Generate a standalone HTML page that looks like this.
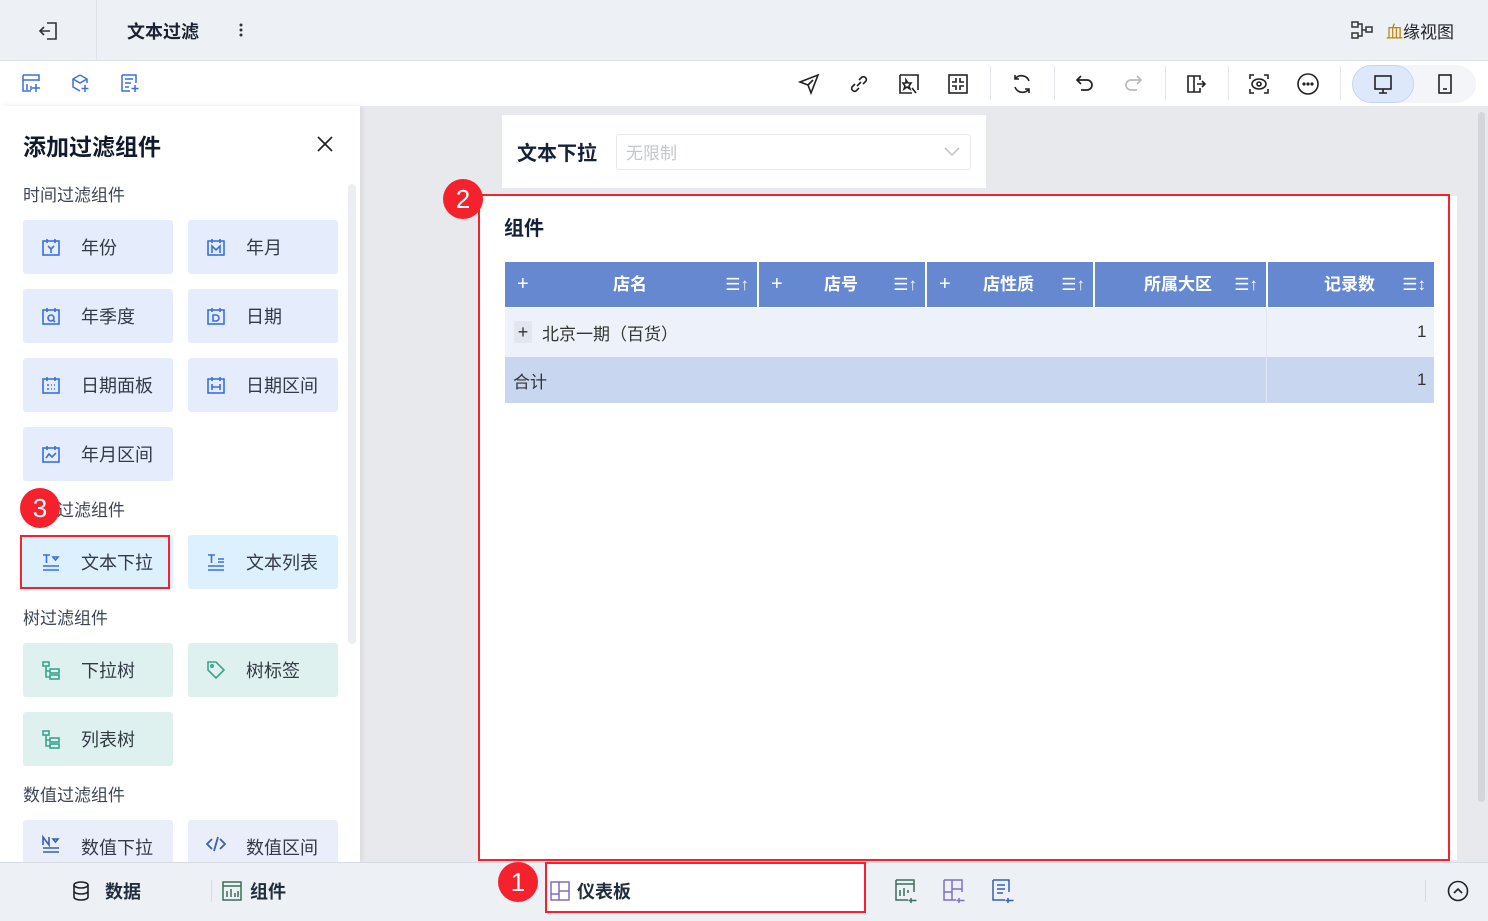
<!DOCTYPE html>
<html><head><meta charset="utf-8"><style>
*{box-sizing:border-box;margin:0;padding:0}
body{width:1488px;height:921px;overflow:hidden;position:relative;font-family:"Liberation Sans","Noto Sans CJK SC",sans-serif;background:#e8e9ed;color:#1f2d3d}
.a{position:absolute}
.btn{position:absolute;width:150px;height:54px;border-radius:3px;font-size:18px;color:#333a45;display:flex;align-items:center;padding-bottom:1px}
.btn svg{margin-left:18px;margin-right:20px}
.sec{position:absolute;left:23px;font-size:17px;color:#3d4654}
.circ{position:absolute;width:40px;height:40px;border-radius:50%;background:#f5222d;color:#fff;font-size:26px;text-align:center;line-height:40px}
.th{position:absolute;top:262px;height:45px;background:#6688d0;color:#fff;font-weight:bold;font-size:17px;line-height:45px}
.ic{position:absolute;top:72px}
</style></head><body>
<div class="a" style="left:0;top:0;width:1488px;height:61px;background:#edf0f5;border-bottom:1px solid #dde1e8"></div>
<div class="a" style="left:96px;top:0;width:1px;height:60px;background:#dde1e8"></div>
<svg class="a" style="left:38px;top:20px" width="22" height="22" viewBox="0 0 22 22" fill="none" stroke="#333" stroke-width="1.6"><path d="M9 3h9v16H9M2 11h10M6 7l-4 4 4 4"/></svg>
<div class="a" style="left:127px;top:18px;font-size:18px;font-weight:bold;color:#1a2233">文本过滤</div>
<svg class="a" style="left:238px;top:22px" width="6" height="16"><circle cx="3" cy="3" r="1.5" fill="#333"/><circle cx="3" cy="8" r="1.5" fill="#333"/><circle cx="3" cy="13" r="1.5" fill="#333"/></svg>
<svg class="a" style="left:1351px;top:21px" width="22" height="18" viewBox="0 0 22 18" fill="none" stroke="#333" stroke-width="1.5"><rect x="1" y="1" width="6" height="5"/><rect x="1" y="12" width="6" height="5"/><rect x="15" y="6" width="6" height="5"/><path d="M7 3h4v12H7M11 9h4"/></svg>
<div class="a" style="left:1386px;top:18px;font-size:17px;color:#222"><span style="color:#b8860b">血</span>缘视图</div>
<div class="a" style="left:0;top:61px;width:1488px;height:45px;background:#fff"></div>
<svg class="a" style="left:21px;top:73px" width="20" height="20" viewBox="0 0 20 20" fill="none" stroke="#3a6fe0" stroke-width="1.5"><path d="M2 2h16v6M2 2v16h8M2 7h16M6 11v6M10 13v4M15 11v8M11 15h8"/></svg>
<svg class="a" style="left:70px;top:73px" width="20" height="20" viewBox="0 0 20 20" fill="none" stroke="#3a6fe0" stroke-width="1.5"><path d="M10 2l7 4v4M10 2L3 6v8l7 4M3 6l7 4 7-4M15 12v7M11.5 15.5h7"/></svg>
<svg class="a" style="left:120px;top:73px" width="20" height="20" viewBox="0 0 20 20" fill="none" stroke="#3a6fe0" stroke-width="1.5"><path d="M2 2h14v8M2 2v16h8M5 6h8M5 10h6M5 14h4M15 12v7M11.5 15.5h7"/></svg>
<svg class="ic" style="left:797px" width="24" height="24" viewBox="0 0 24 24" fill="none" stroke="#222" stroke-width="1.6"><path d="M3 10l18-7-7 18-3-8zM11 13l5-5"/></svg>
<svg class="ic" style="left:847px" width="24" height="24" viewBox="0 0 24 24" fill="none" stroke="#222" stroke-width="1.6"><path d="M10 14l4-4M8 12l-3 3a3 3 0 004 4l3-3M16 12l3-3a3 3 0 00-4-4l-3 3"/></svg>
<svg class="ic" style="left:897px" width="24" height="24" viewBox="0 0 24 24" fill="none" stroke="#222" stroke-width="1.6"><path d="M3 3h18v15M3 3v18h12"/><path d="M9 8l2 3 3 0-2 3 1 3-3-2-3 2 1-3-2-3h3zM15 16l4 5"/></svg>
<svg class="ic" style="left:946px" width="24" height="24" viewBox="0 0 24 24" fill="none" stroke="#222" stroke-width="1.6"><rect x="3" y="3" width="18" height="18"/><path d="M10 6v4H6M14 6v4h4M10 18v-4H6M14 18v-4h4"/></svg>
<div class="a" style="left:990px;top:66px;width:1px;height:34px;background:#e3e6ea"></div>
<svg class="ic" style="left:1010px" width="24" height="24" viewBox="0 0 24 24" fill="none" stroke="#222" stroke-width="1.6"><path d="M19 9a8 8 0 00-14-2M5 15a8 8 0 0014 2M5 3v4h4M19 21v-4h-4"/></svg>
<div class="a" style="left:1054px;top:66px;width:1px;height:34px;background:#e3e6ea"></div>
<svg class="ic" style="left:1073px" width="24" height="24" viewBox="0 0 24 24" fill="none" stroke="#222" stroke-width="1.7"><path d="M4 8h10a5 5 0 010 10H8M8 4L4 8l4 4"/></svg>
<svg class="ic" style="left:1121px" width="24" height="24" viewBox="0 0 24 24" fill="none" stroke="#bbb" stroke-width="1.7"><path d="M20 8H10a5 5 0 000 10h6M16 4l4 4-4 4"/></svg>
<div class="a" style="left:1165px;top:66px;width:1px;height:34px;background:#e3e6ea"></div>
<svg class="ic" style="left:1184px" width="24" height="24" viewBox="0 0 24 24" fill="none" stroke="#222" stroke-width="1.6"><path d="M4 4h6v16H4zM10 4h6v4M10 20h6v-4M13 12h8M18 9l3 3-3 3"/></svg>
<div class="a" style="left:1228px;top:66px;width:1px;height:34px;background:#e3e6ea"></div>
<svg class="ic" style="left:1247px" width="24" height="24" viewBox="0 0 24 24" fill="none" stroke="#222" stroke-width="1.6"><path d="M3 7V3h4M17 3h4v4M21 17v4h-4M7 21H3v-4"/><ellipse cx="12" cy="12" rx="7" ry="5"/><circle cx="12" cy="12" r="2"/></svg>
<svg class="ic" style="left:1296px" width="24" height="24" viewBox="0 0 24 24" fill="none" stroke="#222" stroke-width="1.6"><circle cx="12" cy="12" r="10"/><circle cx="8" cy="12" r=".8" fill="#222"/><circle cx="12" cy="12" r=".8" fill="#222"/><circle cx="16" cy="12" r=".8" fill="#222"/></svg>
<div class="a" style="left:1340px;top:66px;width:1px;height:34px;background:#e3e6ea"></div>
<div class="a" style="left:1352px;top:65px;width:124px;height:38px;border-radius:19px;background:#f3f5f8"></div>
<div class="a" style="left:1352px;top:65px;width:62px;height:38px;border-radius:19px;background:#dde8fb;border:1px solid #c5d6f5"></div>
<svg class="ic" style="left:1371px" width="24" height="24" viewBox="0 0 24 24" fill="none" stroke="#222" stroke-width="1.6"><rect x="4" y="4" width="16" height="13"/><path d="M12 17v4M8 21h8"/></svg>
<svg class="ic" style="left:1433px" width="24" height="24" viewBox="0 0 24 24" fill="none" stroke="#222" stroke-width="1.6"><rect x="6" y="3" width="12" height="18"/><path d="M10 17h4"/></svg>
<div class="a" style="left:0;top:106px;width:360px;height:756px;background:#fff;box-shadow:2px 0 6px rgba(0,0,0,.08)"></div>
<div class="a" style="left:348px;top:184px;width:8px;height:460px;border-radius:4px;background:#eceef2"></div>
<div class="a" style="left:23px;top:128px;font-size:23px;font-weight:bold;color:#111a2b">添加过滤组件</div>
<svg class="a" style="left:316px;top:135px" width="18" height="18" viewBox="0 0 18 18" stroke="#222" stroke-width="1.7"><path d="M2 2l14 14M16 2L2 16"/></svg>
<div class="sec" style="top:181px">时间过滤组件</div>
<div class="btn" style="left:23px;top:220px;background:#e5edfd"><svg width="20" height="20" viewBox="0 0 20 20" fill="none" stroke="#3a6fe0" stroke-width="1.6"><rect x="2" y="4" width="16" height="14"/><path d="M6 2v4M14 2v4M7 9l3 3 3-3M10 12v4"/></svg>年份</div>
<div class="btn" style="left:188px;top:220px;background:#e5edfd"><svg width="20" height="20" viewBox="0 0 20 20" fill="none" stroke="#3a6fe0" stroke-width="1.6"><rect x="2" y="4" width="16" height="14"/><path d="M6 2v4M14 2v4M6 16V9l4 4 4-4v7"/></svg>年月</div>
<div class="btn" style="left:23px;top:289px;background:#e5edfd"><svg width="20" height="20" viewBox="0 0 20 20" fill="none" stroke="#3a6fe0" stroke-width="1.6"><rect x="2" y="4" width="16" height="14"/><path d="M6 2v4M14 2v4"/><circle cx="10" cy="12" r="3"/><path d="M12 14l2 2"/></svg>年季度</div>
<div class="btn" style="left:188px;top:289px;background:#e5edfd"><svg width="20" height="20" viewBox="0 0 20 20" fill="none" stroke="#3a6fe0" stroke-width="1.6"><rect x="2" y="4" width="16" height="14"/><path d="M6 2v4M14 2v4M7 9h3a3 3 0 010 6H7z"/></svg>日期</div>
<div class="btn" style="left:23px;top:358px;background:#e5edfd"><svg width="20" height="20" viewBox="0 0 20 20" fill="none" stroke="#3a6fe0" stroke-width="1.6"><rect x="2" y="4" width="16" height="14"/><path d="M6 2v4M14 2v4M6 10h2M10 10h1M13 10h1M6 14h2M10 14h1M13 14h1"/></svg>日期面板</div>
<div class="btn" style="left:188px;top:358px;background:#e5edfd"><svg width="20" height="20" viewBox="0 0 20 20" fill="none" stroke="#3a6fe0" stroke-width="1.6"><rect x="2" y="4" width="16" height="14"/><path d="M6 2v4M14 2v4M6 9v6M14 9v6M6 12h8"/></svg>日期区间</div>
<div class="btn" style="left:23px;top:427px;background:#e5edfd"><svg width="20" height="20" viewBox="0 0 20 20" fill="none" stroke="#3a6fe0" stroke-width="1.6"><rect x="2" y="4" width="16" height="14"/><path d="M6 2v4M14 2v4M5 14l3-4 3 3 4-4"/></svg>年月区间</div>
<div class="sec" style="top:496px">文本过滤组件</div>
<div class="btn" style="left:23px;top:535px;background:#dcf0fd"><svg width="20" height="20" viewBox="0 0 20 20" fill="none" stroke="#3a6fe0" stroke-width="1.6"><path d="M2 3h7M5.5 3v8M2 14h16M2 18h16M12 5h5l-2.5 3z" /></svg>文本下拉</div>
<div class="a" style="left:20px;top:535px;width:150px;height:54px;border:2.5px solid #f5222d"></div>
<div class="btn" style="left:188px;top:535px;background:#dcf0fd"><svg width="20" height="20" viewBox="0 0 20 20" fill="none" stroke="#3a6fe0" stroke-width="1.6"><path d="M2 3h7M5.5 3v8M2 14h16M2 18h16M12 7h6M12 10h6"/></svg>文本列表</div>
<div class="sec" style="top:604px">树过滤组件</div>
<div class="btn" style="left:23px;top:643px;background:#dff1ee"><svg width="20" height="20" viewBox="0 0 20 20" fill="none" stroke="#3aa58c" stroke-width="1.6"><rect x="2" y="2" width="6" height="4"/><rect x="9" y="9" width="9" height="4"/><rect x="9" y="15" width="9" height="4"/><path d="M5 6v11h4M5 11h4"/></svg>下拉树</div>
<div class="btn" style="left:188px;top:643px;background:#dff1ee"><svg width="20" height="20" viewBox="0 0 20 20" fill="none" stroke="#3aa58c" stroke-width="1.6"><path d="M2 2h8l8 8-8 8-8-8z"/><circle cx="6" cy="6" r="1.2"/></svg>树标签</div>
<div class="btn" style="left:23px;top:712px;background:#dff1ee"><svg width="20" height="20" viewBox="0 0 20 20" fill="none" stroke="#3aa58c" stroke-width="1.6"><rect x="2" y="2" width="6" height="4"/><rect x="9" y="9" width="9" height="4"/><rect x="9" y="15" width="9" height="4"/><path d="M5 6v11h4M5 11h4"/></svg>列表树</div>
<div class="sec" style="top:781px">数值过滤组件</div>
<div class="btn" style="left:23px;top:820px;height:42px;border-radius:3px 3px 0 0;align-items:flex-start;padding-top:14px;background:#e9eefa"><svg width="20" height="20" viewBox="0 0 20 20" fill="none" stroke="#3a5fb0" stroke-width="1.6"><path d="M2 11V3l6 8V3M2 14h16M2 18h16M12 5h5l-2.5 3z"/></svg>数值下拉</div>
<div class="btn" style="left:188px;top:820px;height:42px;border-radius:3px 3px 0 0;align-items:flex-start;padding-top:14px;background:#e9eefa"><svg width="20" height="20" viewBox="0 0 20 20" fill="none" stroke="#3a5fb0" stroke-width="1.8"><path d="M6 5l-5 5 5 5M14 5l5 5-5 5M12 3L8 17"/></svg>数值区间</div>
<div class="circ" style="left:20px;top:488px">3</div>
<div class="a" style="left:1478px;top:112px;width:7px;height:690px;border-radius:4px;background:#d4d6db"></div>
<div class="a" style="left:502px;top:115px;width:484px;height:73px;background:#fff"></div>
<div class="a" style="left:517px;top:137px;font-size:20px;font-weight:bold;color:#14213a">文本下拉</div>
<div class="a" style="left:616px;top:134px;width:355px;height:36px;border:1px solid #e6e8ec;border-radius:3px;font-size:17px;color:#c4c7cc;padding:4px 9px">无限制</div>
<svg class="a" style="left:943px;top:145px" width="18" height="12" viewBox="0 0 18 12" fill="none" stroke="#c4c7cc" stroke-width="1.6"><path d="M2 3l7 7 7-7"/></svg>
<div class="a" style="left:480px;top:196px;width:977px;height:664px;background:#fff"></div>
<div class="a" style="left:478px;top:194px;width:972px;height:667px;border:2.5px solid #f5222d"></div>
<div class="a" style="left:504px;top:212px;font-size:20px;font-weight:bold;color:#14213a">组件</div>
<div class="th" style="left:505px;width:252px"><span style="position:absolute;left:12px;font-weight:normal;font-size:20px">+</span><span style="position:absolute;left:108px">店名</span><span style="position:absolute;right:8px;font-weight:normal">☰↑</span></div>
<div class="th" style="left:759px;width:166px"><span style="position:absolute;left:12px;font-weight:normal;font-size:20px">+</span><span style="position:absolute;left:65px">店号</span><span style="position:absolute;right:8px;font-weight:normal">☰↑</span></div>
<div class="th" style="left:927px;width:166px"><span style="position:absolute;left:12px;font-weight:normal;font-size:20px">+</span><span style="position:absolute;left:56px">店性质</span><span style="position:absolute;right:8px;font-weight:normal">☰↑</span></div>
<div class="th" style="left:1095px;width:171px"><span style="position:absolute;left:49px">所属大区</span><span style="position:absolute;right:8px;font-weight:normal">☰↑</span></div>
<div class="th" style="left:1268px;width:166px"><span style="position:absolute;left:56px">记录数</span><span style="position:absolute;right:8px;font-weight:normal">☰↕</span></div>
<div class="a" style="left:505px;top:308px;width:929px;height:49px;background:#edf1f9"></div>
<div class="a" style="left:1266px;top:308px;width:1px;height:96px;background:#e2e7f0"></div>
<div class="a" style="left:514px;top:321px;width:18px;height:22px;background:#e2e6ee;text-align:center;font-size:18px;line-height:22px;color:#333">+</div>
<div class="a" style="left:542px;top:320px;font-size:17px;color:#333">北京一期（百货）</div>
<div class="a" style="left:1417px;top:322px;font-size:17px;color:#333">1</div>
<div class="a" style="left:505px;top:357px;width:929px;height:46px;background:#c8d6ef"></div>
<div class="a" style="left:1266px;top:357px;width:1px;height:47px;background:#e2e7f0"></div>
<div class="a" style="left:513px;top:368px;font-size:17px;color:#333">合计</div>
<div class="a" style="left:1417px;top:370px;font-size:17px;color:#333">1</div>
<div class="circ" style="left:443px;top:179px">2</div>
<div class="a" style="left:0;top:862px;width:1488px;height:59px;background:#edf0f5;border-top:1px solid #d6dae1"></div>
<svg class="a" style="left:72px;top:881px" width="18" height="20" viewBox="0 0 18 20" fill="none" stroke="#222" stroke-width="1.6"><ellipse cx="9" cy="4" rx="7" ry="3"/><path d="M2 4v12c0 4 14 4 14 0V4M2 10c0 4 14 4 14 0"/></svg>
<div class="a" style="left:105px;top:878px;font-size:18px;font-weight:bold">数据</div>
<div class="a" style="left:211px;top:880px;width:1px;height:22px;background:#d6dae1"></div>
<svg class="a" style="left:222px;top:881px" width="20" height="20" viewBox="0 0 20 20" fill="none" stroke="#3a6f5a" stroke-width="1.5"><rect x="1" y="1" width="18" height="18"/><path d="M1 5h18M5 16v-6M9 16v-8M13 16v-4M16 16v-6"/></svg>
<div class="a" style="left:250px;top:878px;font-size:18px;font-weight:bold">组件</div>
<div class="a" style="left:545px;top:862px;width:321px;height:51px;background:#fff;border:2.5px solid #f5222d"></div>
<svg class="a" style="left:550px;top:881px" width="20" height="20" viewBox="0 0 20 20" fill="none" stroke="#7e6fc4" stroke-width="1.5"><rect x="1" y="1" width="18" height="18"/><path d="M9 1v18M9 10h10M1 13h8"/></svg>
<div class="a" style="left:577px;top:878px;font-size:18px;font-weight:bold">仪表板</div>
<div class="circ" style="left:498px;top:862px">1</div>
<svg class="a" style="left:895px;top:879px" width="22" height="24" viewBox="0 0 22 24" fill="none" stroke="#3a6f5a" stroke-width="1.5"><path d="M1 1h18v12M1 1v20h12M1 5h18M5 17v-6M9 17v-8M13 14v-3M16 19v5M13.5 21.5h8"/></svg>
<svg class="a" style="left:943px;top:879px" width="22" height="24" viewBox="0 0 22 24" fill="none" stroke="#7e6fc4" stroke-width="1.5"><path d="M1 1h18v12M1 1v20h12M9 1v20M9 10h10M1 13h8M16 19v5M13.5 21.5h8"/></svg>
<svg class="a" style="left:992px;top:879px" width="22" height="24" viewBox="0 0 22 24" fill="none" stroke="#3a5fb0" stroke-width="1.5"><path d="M1 1h16v12M1 1v20h12M5 6h8M5 10h8M5 14h6M16 19v5M13.5 21.5h8"/></svg>
<div class="a" style="left:1425px;top:880px;width:1px;height:22px;background:#d6dae1"></div>
<svg class="a" style="left:1447px;top:880px" width="22" height="22" viewBox="0 0 22 22" fill="none" stroke="#222" stroke-width="1.6"><circle cx="11" cy="11" r="9.5"/><path d="M7 13l4-4 4 4"/></svg>
</body></html>
